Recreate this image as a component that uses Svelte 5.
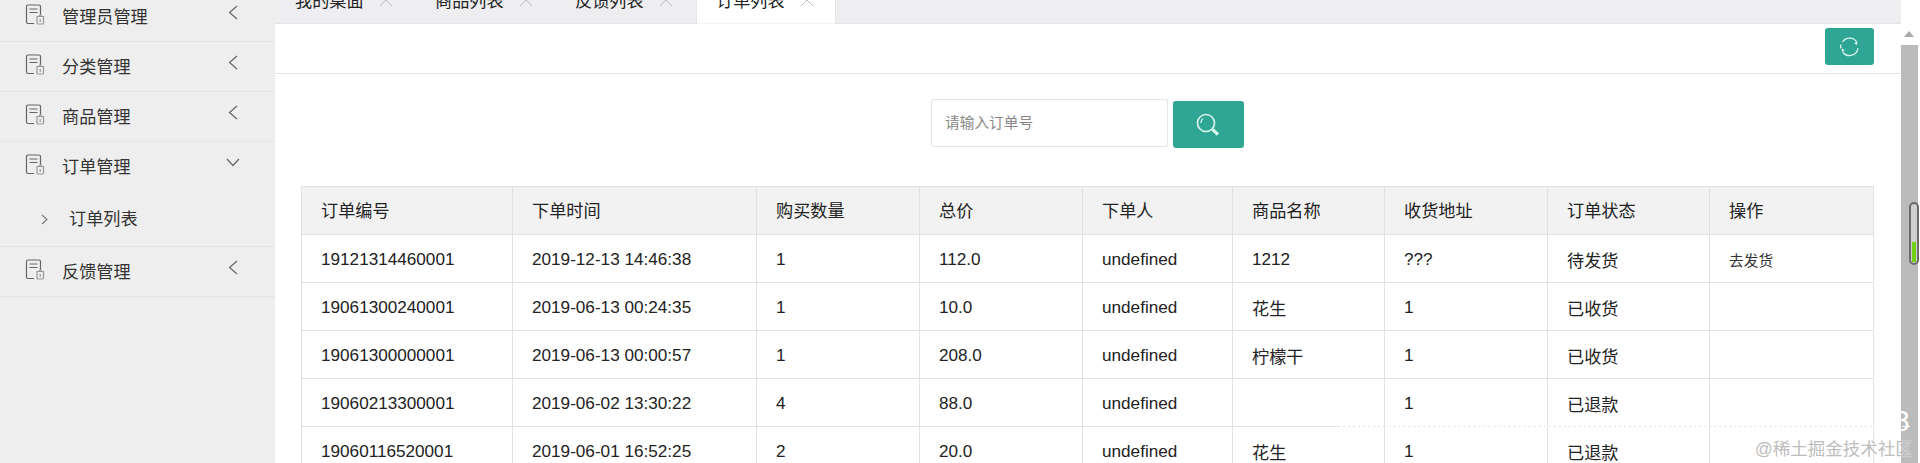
<script>
  const menus = [
    { name: '管理员管理' },
    { name: '分类管理' },
    { name: '商品管理' },
    { name: '订单管理', open: true, children: ['订单列表'] },
    { name: '反馈管理' }
  ];
  const tabs = ['我的桌面', '商品列表', '反馈列表', '订单列表'];
  const columns = [
    ['订单编号', 211], ['下单时间', 244], ['购买数量', 163], ['总价', 163], ['下单人', 150],
    ['商品名称', 152], ['收货地址', 163], ['订单状态', 162], ['操作', 164]
  ];
  const orders = [
    ['19121314460001', '2019-12-13 14:46:38', '1', '112.0', 'undefined', '1212', '???', '待发货', '去发货'],
    ['19061300240001', '2019-06-13 00:24:35', '1', '10.0', 'undefined', '花生', '1', '已收货', ''],
    ['19061300000001', '2019-06-13 00:00:57', '1', '208.0', 'undefined', '柠檬干', '1', '已收货', ''],
    ['19060213300001', '2019-06-02 13:30:22', '4', '88.0', 'undefined', '', '1', '已退款', ''],
    ['19060116520001', '2019-06-01 16:52:25', '2', '20.0', 'undefined', '花生', '1', '已退款', '']
  ];
</script>

<div class="page">
  <aside class="sidebar">
    {#each menus as menu}
      <div class="group">
        <div class="item">
          <svg class="doc" width="20" height="21" viewBox="0 0 20 21" fill="none" stroke="#666" stroke-width="1.2">
            <path d="M9 19.5H3a1.5 1.5 0 0 1-1.500-1.500V2.500A1.500 1.500 0 0 1 3 1h11a1.500 1.500 0 0 1 1.500 1.500V11" />
            <path d="M4.500 5h8M4.500 8.500h8" />
            <path d="M12 12.500h6.500v6.500a1 1 0 0 1-1 1h-4.500a1 1 0 0 1-1-1z" stroke="#999" />
            <path d="M14 12.500c0-2 2.500-2 2.500 0M15.200 15v3" stroke="#999" />
          </svg>
          <span class="label">{menu.name}</span>
          {#if menu.open}
            <svg class="caret" width="14" height="9" viewBox="0 0 14 9" fill="none" stroke="#666" stroke-width="1.200"><path d="M1 1l6 6.500L13 1" /></svg>
          {:else}
            <svg class="caret" width="14" height="15" viewBox="0 0 14 15" fill="none" stroke="#666" stroke-width="1.200"><path d="M11 1L3.500 7.500 11 14" /></svg>
          {/if}
        </div>
        {#if menu.children}
          {#each menu.children as child}
            <div class="subitem">
              <svg width="7" height="11" viewBox="0 0 7 11" fill="none" stroke="#777" stroke-width="1.100"><path d="M1 1l5 4.500L1 10" /></svg>
              <span>{child}</span>
            </div>
          {/each}
        {/if}
      </div>
    {/each}
  </aside>

  <main class="main">
    <nav class="tabs">
      {#each tabs as tab, i}
        <div class="tab" class:active={i === tabs.length - 1}>
          <span>{tab}</span>
          <svg width="14" height="14" viewBox="0 0 14 14" fill="none" stroke="#bbb" stroke-width="1"><path d="M1 1l12 12M13 1L1 13" /></svg>
        </div>
      {/each}
    </nav>

    <div class="toolbar">
      <button class="btn refresh" aria-label="刷新">
        <svg width="21" height="21" viewBox="0 0 21 21" fill="none" stroke="#d8f3ee" stroke-width="1.300">
          <path d="M3.500 6A8.500 8.500 0 0 1 18 6.500" />
          <path d="M19 12a8.500 8.500 0 0 1-15 4.500" />
          <path d="M1.800 8.500A8.500 8.500 0 0 0 2 12.500" />
          <path d="M18 5l.2 4-3-1.500zM3 16.500L2.800 12.500l3 1.500z" fill="#d8f3ee" stroke="none" />
        </svg>
      </button>
    </div>

    <div class="search">
      <input type="text" placeholder="请输入订单号" />
      <button class="btn go" aria-label="搜索">
        <svg width="24" height="24" viewBox="0 0 24 24" fill="none" stroke="#d8f3ee">
          <circle cx="10" cy="10" r="8.500" stroke-width="1.700" />
          <path d="M4.800 10a5.200 5.200 0 0 1 2.200-4.200" stroke-width="1.300" />
          <path d="M16.500 16.500l5.500 5" stroke-width="3.200" />
        </svg>
      </button>
    </div>

    <table>
      <colgroup>
        {#each columns as col}
          <col style="width: {col[1]}px" />
        {/each}
      </colgroup>
      <thead>
        <tr>
          {#each columns as col}
            <th>{col[0]}</th>
          {/each}
        </tr>
      </thead>
      <tbody>
        {#each orders as order}
          <tr>
            {#each order as cell, i}
              <td class:action={i === 8}>{cell}</td>
            {/each}
          </tr>
        {/each}
      </tbody>
    </table>
  </main>

  <div class="scrollbar">
    <div class="arrow"></div>
    <div class="track">
      <div class="thumb"><div class="level"></div></div>
    </div>
  </div>

  <div class="dash"></div>
  <div class="eight">8</div>
  <div class="watermark">@稀土掘金技术社区</div>
</div>

<style>
  :global(body) {
    margin: 0;
  }

  .page {
    position: relative;
    display: flex;
    width: 1920px;
    height: 463px;
    overflow: hidden;
    background: #fff;
    font-family: "Liberation Sans", "Noto Sans CJK SC", sans-serif;
    font-size: 17.150px;
    color: #222;
  }

  .sidebar {
    flex: none;
    width: 275px;
    background: #eee;
    margin-top: -8px;
  }

  .group {
    border-bottom: 1px solid #e3e3e3;
  }

  .item {
    display: flex;
    align-items: center;
    height: 49px;
    padding: 0 35px 0 25px;
    color: #333;
    position: relative;
  }

  .doc {
    flex: none;
    margin-top: -4px;
  }

  .label {
    margin-left: 17px;
    margin-top: -2px;
    flex: 1;
  }

  .caret {
    flex: none;
    margin-top: -8px;
  }

  .subitem {
    display: flex;
    align-items: center;
    height: 55px;
    padding-left: 41px;
    color: #333;
    margin-top: 1px;
    margin-bottom: -1px;
  }

  .subitem span {
    margin-left: 21px;
    margin-top: -4px;
  }

  .main {
    flex: none;
    width: 1626px;
    display: flex;
    flex-direction: column;
  }

  .tabs {
    display: flex;
    flex: none;
    height: 48px;
    margin-top: -24px;
    background: #eeeef0;
    border-bottom: 1px solid #e4e4e4;
    box-sizing: border-box;
  }

  .tab {
    display: flex;
    align-items: center;
    box-sizing: border-box;
    width: 140px;
    height: 47px;
    padding-left: 20px;
    gap: 15px;
  }

  .tab.active {
    width: 140px;
    margin-left: 1px;
    height: 48px;
    background: #fff;
    padding-left: 19px;
    border-right: 1px solid #e4e4e4;
    border-left: 1px solid #e4e4e4;
    border-bottom: 1px solid #f4f4f4;
  }

  .toolbar {
    display: flex;
    justify-content: flex-end;
    flex: none;
    box-sizing: border-box;
    height: 50px;
    padding: 4px 27px 0 0;
    border-bottom: 1px solid #e6e6e6;
  }

  .btn {
    display: flex;
    align-items: center;
    justify-content: center;
    padding: 0;
    border: 0;
    border-radius: 3px;
    background: #2fa593;
  }

  .refresh {
    width: 49px;
    height: 37px;
  }

  .search {
    display: flex;
    justify-content: center;
    gap: 5px;
    flex: none;
    height: 112px;
    padding: 25px 1px 0 0;
    box-sizing: border-box;
  }

  input {
    box-sizing: border-box;
    width: 237px;
    height: 48px;
    padding: 0 13px;
    border: 1px solid #e6e6e6;
    border-radius: 2px;
    font: inherit;
    font-size: 14.700px;
    outline: none;
  }

  input::placeholder {
    color: #888;
  }

  .go {
    width: 71px;
    height: 47px;
    margin-top: 2px;
  }

  .go svg {
    margin-left: -2px;
  }

  table {
    flex: none;
    width: 1573px;
    margin-left: 26px;
    border-collapse: collapse;
    table-layout: fixed;
  }

  th,
  td {
    box-sizing: border-box;
    height: 48px;
    padding: 1px 19px 0;
    border: 1px solid #e2e2e2;
    text-align: left;
    font-weight: 400;
    white-space: nowrap;
  }

  th {
    padding: 0 19px 2px;
    background: #f2f2f2;
  }

  td.action {
    font-size: 14.700px;
    color: #333;
  }

  .scrollbar {
    position: absolute;
    top: 23px;
    left: 1901px;
    width: 19px;
    bottom: 0;
    background: #fff;
  }

  .arrow {
    height: 22px;
    position: relative;
  }

  .arrow::after {
    content: "";
    position: absolute;
    left: 3px;
    top: 8px;
    border: 5px solid transparent;
    border-top: 0;
    border-left-width: 5px;
    border-bottom: 6px solid #aaa;
  }

  .track {
    position: relative;
    width: 17px;
    height: 100%;
    background: #bbb;
  }

  .thumb {
    position: absolute;
    top: 157px;
    left: 8px;
    box-sizing: border-box;
    width: 10px;
    height: 63px;
    border: 2px solid #6b6b6b;
    border-radius: 5px;
    background: #d0d0d0;
  }

  .level {
    position: absolute;
    left: 1px;
    right: 1px;
    bottom: 1px;
    height: 20px;
    background: #6fd016;
  }

  .dash {
    position: absolute;
    left: 1340px;
    width: 570px;
    top: 426px;
    border-top: 1px dashed #fff;
  }

  .eight {
    position: absolute;
    left: 1893px;
    top: 404px;
    font-size: 30px;
    color: #fff;
  }

  .watermark {
    position: absolute;
    left: 1755px;
    top: 437px;
    font-size: 17.500px;
    line-height: 24px;
    color: #bdbdbd;
    text-shadow: 0 0 2px #fff;
    white-space: nowrap;
  }
</style>
